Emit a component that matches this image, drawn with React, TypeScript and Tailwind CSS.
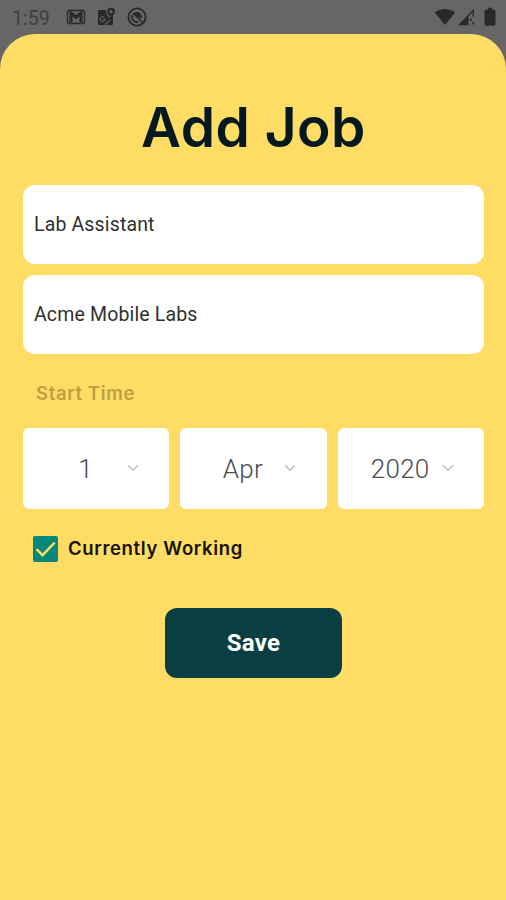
import type { ReactNode } from "react";

const fields = ["Lab Assistant", "Acme Mobile Labs"];

const dateParts = [
  { label: "day", value: "1" },
  { label: "month", value: "Apr" },
  { label: "year", value: "2020" },
];

function StatusBar() {
  return (
    <div className="flex h-[34px] items-center justify-between pl-[12px] pr-[10px] text-[#292929]">
      <div className="flex items-center">
        <span className="w-[54px] pt-[3px] font-['Roboto',sans-serif] text-[19.5px] leading-none text-[#414141]">
          1:59
        </span>
        {/* Mail */}
        <svg width="20" height="18" viewBox="0 0 20 18" fill="none">
          <rect x="1.500" y="2.500" width="17" height="13" rx="1.500" stroke="currentColor" strokeWidth="1.400" />
          <path d="M5 14.500V5L10 9.200 15 5v9.500" stroke="currentColor" strokeWidth="3" />
        </svg>
        {/* Maps */}
        <svg className="ml-[11px]" width="19" height="20" viewBox="0 0 19 20">
          <path
            d="M2.500 3H9c-.6 3 1.500 5.500 3.500 8 1-1.400 2.200-2.500 3.500-4v9.500c0 1-.6 1.500-1.500 1.500h-12C1.500 18 1 17.400 1 16.500v-12C1 3.600 1.600 3 2.500 3Z"
            fill="currentColor"
          />
          <path d="M7.300 10.400A2.400 2.400 0 1 0 8 12.300H6M8 18l5-5" fill="none" stroke="#666" strokeWidth="1.100" />
          <path
            d="M14 .8a4 4 0 0 1 4 4c0 2.400-2.800 3.400-4 6-1.200-2.600-4-3.600-4-6a4 4 0 0 1 4-4Z"
            fill="currentColor"
          />
          <circle cx="14" cy="4.700" r="1.600" fill="#666" />
        </svg>
        {/* Do not track */}
        <svg className="ml-[11px]" width="20" height="20" viewBox="0 0 20 20" fill="none">
          <circle cx="10" cy="10" r="8.600" stroke="currentColor" strokeWidth="1.800" />
          <path d="M11.500 14.800A5 5 0 0 1 5.400 8" stroke="currentColor" strokeWidth="1.600" />
          <path d="M6.500 6.500c3-3 8-1.500 8.500 3L14.500 12l-2-1.500-2 .5-4-4.500Z" fill="currentColor" />
          <path d="m6 6 10 10" stroke="currentColor" strokeWidth="1.600" />
        </svg>
      </div>
      <div className="flex items-center">
        <svg width="22" height="18" viewBox="0 0 22 18">
          <path d="M.8 4.500C6.500-.2 15.500-.2 21.200 4.500L11 17Z" fill="currentColor" />
        </svg>
        <svg className="ml-[1px]" width="18" height="18" viewBox="0 0 18 18">
          <path d="M1 17.300 17 .8V9h-1.300V4L11.500 8.500V17.300Z" fill="currentColor" />
          <path d="M13.700 10.500v2.500M16.200 13.800v2.800" stroke="currentColor" strokeWidth="1.600" />
        </svg>
        <svg className="ml-[9px]" width="12" height="20" viewBox="0 0 12 20">
          <path
            d="M4 .8h4v2h2c1 0 1.500.6 1.500 1.500v13c0 .9-.6 1.500-1.500 1.500H2C1.100 18.800.5 18.200.5 17.300v-13c0-.9.5-1.500 1.500-1.500h2Z"
            fill="currentColor"
          />
        </svg>
      </div>
    </div>
  );
}

function Field({ children }: { children: ReactNode }) {
  return (
    <div className="flex h-[79px] items-center rounded-[12px] bg-white pl-[11px] pt-[2px] font-['Roboto',sans-serif] text-[19.5px] tracking-[0.15px] text-[#303030]">
      {children}
    </div>
  );
}

function DateSelect({ value }: { value: string }) {
  return (
    <button className="flex h-[81.5px] items-center rounded-[6px] bg-white pl-[21px]">
      <span className="w-[83px] pt-[2px] text-center font-['Roboto',sans-serif] text-[26px] font-light tracking-[0.3px] text-[#4b4b4b]">
        {value}
      </span>
      <svg width="12" height="8" viewBox="0 0 12 8" fill="none">
        <path d="M1 1.200 6 6.200 11 1.200" stroke="#c0c0c0" strokeWidth="1.500" />
      </svg>
    </button>
  );
}

export default function App() {
  return (
    <div className="flex h-[900px] w-[506px] flex-col overflow-hidden bg-[#666666]">
      <StatusBar />

      <main className="flex flex-1 flex-col rounded-t-[35px] bg-[#ffdc64] pl-[23px] pr-[22px] pt-[57.5px] font-['Inter',sans-serif]">
        <h1 className="h-[93px] text-center text-[55px] leading-[70px] font-semibold tracking-[0.5px] whitespace-nowrap text-[#03191e]">
          Add Job
        </h1>

        <div className="flex flex-col gap-[11px]">
          {fields.map((field) => (
            <Field key={field}>{field}</Field>
          ))}
        </div>

        <p className="mt-[27px] pl-[13px] text-[18.5px] leading-[24px] font-semibold tracking-[0.62px] text-[#bf9f3f]">
          Start Time
        </p>

        <div className="mt-[23px] grid grid-cols-3 gap-[11px]">
          {dateParts.map((part) => (
            <DateSelect key={part.label} value={part.value} />
          ))}
        </div>

        <label className="mt-[26.5px] flex h-[26px] items-center pl-[10px]">
          <svg width="25" height="26" viewBox="0 0 25 26" fill="none">
            <rect width="25" height="26" rx="2" fill="#07877a" />
            <path d="m3.500 13.200 6 6L21.800 6.500" stroke="#ffdc64" strokeWidth="2.400" />
          </svg>
          <span className="ml-[10px] text-[18.5px] font-semibold tracking-[0.65px] whitespace-nowrap text-[#151200]">
            Currently Working
          </span>
        </label>

        <button className="mt-[46px] h-[70px] w-[177px] self-center rounded-[12px] bg-[#093f43] font-['Roboto',sans-serif] text-[24px] font-bold tracking-[0.3px] text-white">
          Save
        </button>
      </main>
    </div>
  );
}
